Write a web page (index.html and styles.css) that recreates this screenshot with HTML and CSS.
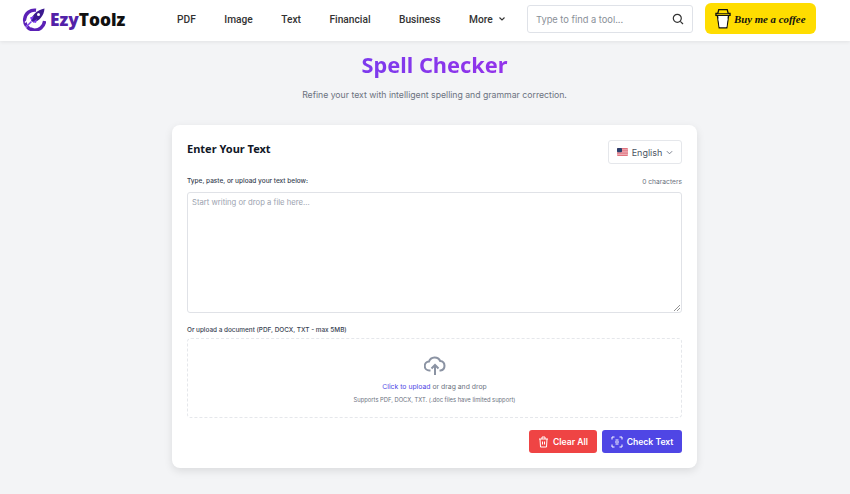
FILE: index.html
```html
<!DOCTYPE html>
<html lang="en">
<head>
<meta charset="UTF-8">
<meta name="viewport" content="width=device-width, initial-scale=1.0">
<title>Spell Checker - EzyToolz</title>
<link rel="stylesheet" href="styles.css">
</head>
<body>
<header class="site-header">
  <a class="logo" href="#">
    <svg class="logo-mark" width="24" height="24" viewBox="0 0 24 24">
      <path d="M14 3.200A10 10 0 1 0 22.600 14" fill="none" stroke="#5b21b6" stroke-width="3.400"/>
      <path d="M9 13.500C10 8 15 3 22.500 1.500 22 9 17 14 11.500 15.500Z" fill="#3b1a8f"/>
      <path d="M8 10.500 12 9 9.500 14ZM14 16l1-4-4.500 3Z" fill="#7c3aed"/>
      <circle cx="16.500" cy="7.500" r="1.500" fill="#fff"/>
      <path d="M3.500 20.500 9 15M8 20l3-3M3 15.500l3-3" stroke="#fff" stroke-width="1.300"/>
      <path d="M4 20 9.500 14.500" stroke="#7c3aed" stroke-width="1.400"/>
    </svg>
    <span class="logo-text"><span class="logo-ezy">Ezy</span>Toolz</span>
  </a>
  <nav class="main-nav">
    <a href="#">PDF</a>
    <a href="#">Image</a>
    <a href="#">Text</a>
    <a href="#">Financial</a>
    <a href="#">Business</a>
    <a class="nav-more" href="#">More
      <svg width="8" height="8" viewBox="0 0 8 8"><path d="M1.500 2.500 4 5l2.500-2.500" fill="none" stroke="#333" stroke-width="1.100"/></svg>
    </a>
  </nav>
  <div class="search">
    <span class="search-hint">Type to find a tool...</span>
    <svg width="12" height="12" viewBox="0 0 12 12"><circle cx="5.300" cy="5.300" r="4" fill="none" stroke="#333" stroke-width="1.200"/><path d="M8.300 8.300 11 11" stroke="#333" stroke-width="1.200"/></svg>
  </div>
  <a class="coffee" href="#">
    <svg width="16" height="21" viewBox="0 0 17 22">
      <path d="M2.500 7.500 4.500 21h8l2-13.500" fill="#fff" stroke="#111" stroke-width="1.500"/>
      <path d="M1 5.500h15v2.200H1z" fill="#ffdd00" stroke="#111" stroke-width="1.400"/>
      <path d="M3 5.500 4 1.500h9l1 4" fill="#ffdd00" stroke="#111" stroke-width="1.400"/>
      <path d="M3.500 11l1.300 9h7.400l1.300-9z" fill="#fff"/>
    </svg>
    <span>Buy me a coffee</span>
  </a>
</header>

<main class="page">
  <h1 class="title">Spell Checker</h1>
  <p class="subtitle">Refine your text with intelligent spelling and grammar correction.</p>

  <section class="card">
    <div class="card-top">
      <h2>Enter Your Text</h2>
      <button class="lang">
        <svg width="11" height="8" viewBox="0 0 11 8">
          <rect width="11" height="8" rx="1" fill="#e0737f"/>
          <path d="M0 1.700h11M0 3.300h11M0 4.900h11M0 6.500h11" stroke="#f3c3c8" stroke-width=".7"/>
          <rect width="5" height="4.200" rx="1" fill="#2c3e6b"/>
        </svg>
        English
        <svg width="7" height="7" viewBox="0 0 8 8"><path d="M1 2.500 4 5.500l3-3" fill="none" stroke="#6b7280" stroke-width="1"/></svg>
      </button>
    </div>

    <div class="field-row">
      <label>Type, paste, or upload your text below:</label>
      <span class="count">0 characters</span>
    </div>
    <div class="text-box">
      <span>Start writing or drop a file here...</span>
      <svg class="grip" width="6" height="6" viewBox="0 0 6 6"><path d="M6 0 0 6M6 3 3 6" stroke="#777" stroke-width=".8"/></svg>
    </div>

    <label class="upload-label">Or upload a document (PDF, DOCX, TXT - max 5MB)</label>
    <div class="drop">
      <svg width="22" height="20" viewBox="0 0 22 20" fill="none" stroke="#8b93a3" stroke-width="2">
        <path d="M6.500 14.500H5.500A4.500 4.500 0 0 1 5 5.500 6 6 0 0 1 16.200 5 4.800 4.800 0 0 1 16.500 14.500H15.500"/>
        <path d="M11 19V9M7.500 12.500 11 9l3.500 3.500"/>
      </svg>
      <p class="drop-main"><span class="drop-link">Click to upload</span> or drag and drop</p>
      <p class="drop-note">Supports PDF, DOCX, TXT. (.doc files have limited support)</p>
    </div>

    <div class="actions">
      <button class="btn btn-red">
        <svg width="11" height="12" viewBox="0 0 11 12" fill="none" stroke="#fff" stroke-width="1"><path d="M1 3h9M2 3l.5 8h6L9 3M4 3V1h3v2M4.500 5.500v3M6.500 5.500v3"/></svg>
        Clear All
      </button>
      <button class="btn btn-blue">
        <svg width="12" height="12" viewBox="0 0 12 12" fill="none" stroke="#fff" stroke-width="1"><path d="M1 3.500V1h2.500M8.500 1H11v2.500M11 8.500V11H8.500M3.500 11H1V8.500M4 6h4M4.500 4h3M4.500 8h3"/></svg>
        Check Text
      </button>
    </div>
  </section>
</main>
</body>
</html>
```

FILE: styles.css
```css
* {
  box-sizing: border-box;
}
html, body {
  height: 100%;
}
body {
  margin: 0;
  overflow: hidden;
  background: #f3f4f6;
  font-family: Inter, "Liberation Sans", sans-serif;
  color: #1f2937;
}
a {
  color: inherit;
  text-decoration: none;
}
p, h1, h2 {
  margin: 0;
}

.site-header {
  display: flex;
  align-items: center;
  height: 41px;
  padding: 0 34px 3px 22px;
  background: #fff;
  box-shadow: 0 1px 4px rgba(0, 0, 0, 0.08);
}
.logo {
  display: flex;
  align-items: center;
  gap: 4px;
  width: 155px;
  flex: none;
}
.logo-text {
  font-family: "Open Sans", sans-serif;
  font-size: 17.300px;
  font-weight: 800;
  color: #111;
}
.logo-ezy {
  color: #5221a8;
}
.main-nav {
  display: flex;
  align-items: center;
  gap: 28.500px;
  width: 350px;
  flex: none;
  font-family: Roboto, sans-serif;
  font-size: 10.200px;
  font-weight: 500;
  color: #333;
}
.nav-more {
  display: flex;
  align-items: center;
  gap: 5px;
}
.search {
  display: flex;
  align-items: center;
  justify-content: space-between;
  width: 166px;
  height: 28px;
  flex: none;
  padding: 0 8px;
  border: 1px solid #dfe2e8;
  border-radius: 3px;
  font-size: 9.300px;
  color: #8a8f98;
}
.coffee {
  display: flex;
  align-items: center;
  gap: 3px;
  width: 111px;
  height: 31px;
  flex: none;
  margin: 0 0 1px 12px;
  padding-left: 10px;
  border-radius: 6px;
  background: #ffdd00;
  font-family: "Liberation Serif", serif;
  font-size: 10.800px;
  font-style: italic;
  font-weight: 700;
  color: #111;
}

.page {
  display: flex;
  flex-direction: column;
  align-items: center;
  padding-left: 19px;
}
.title {
  margin-top: 8px;
  font-family: "Noto Sans", sans-serif;
  font-size: 21.800px;
  line-height: 32px;
  font-weight: 700;
  background: linear-gradient(90deg, #7c3aed, #9333ea);
  -webkit-background-clip: text;
  background-clip: text;
  color: transparent;
}
.subtitle {
  margin-top: 7px;
  font-size: 8.700px;
  line-height: 14px;
  color: #6b7280;
}
.card {
  width: 525px;
  height: 343px;
  margin-top: 23px;
  padding: 15px;
  border-radius: 8px;
  background: #fff;
  box-shadow: 0 3px 8px rgba(0, 0, 0, 0.1);
}
.card-top {
  display: flex;
  justify-content: space-between;
  align-items: flex-start;
}
.card-top h2 {
  font-family: "Noto Sans", sans-serif;
  font-size: 11px;
  line-height: 17px;
  font-weight: 700;
  color: #111827;
}
.lang {
  display: flex;
  align-items: center;
  justify-content: center;
  gap: 4px;
  width: 74px;
  height: 24px;
  border: 1px solid #e5e7eb;
  border-radius: 3px;
  background: #fff;
  font-family: inherit;
  font-size: 9px;
  color: #4b5563;
}
.field-row {
  display: flex;
  justify-content: space-between;
  align-items: flex-start;
  margin-top: 11px;
  line-height: 12px;
}
.field-row label, .upload-label {
  font-size: 6.500px;
  font-weight: 500;
  color: #374151;
}
.count {
  margin-top: 1px;
  font-size: 6.700px;
  color: #6b7280;
}
.text-box {
  position: relative;
  height: 121px;
  margin-top: 4px;
  padding: 4px;
  border: 1px solid #e0e2e7;
  border-radius: 3px;
  font-size: 7.700px;
  line-height: 11px;
  color: #9ca3af;
}
.grip {
  position: absolute;
  right: 1px;
  bottom: 1px;
}
.upload-label {
  display: block;
  margin-top: 11px;
  margin-bottom: 2px;
  font-size: 6.400px;
  line-height: 12px;
}
.drop {
  display: flex;
  flex-direction: column;
  align-items: center;
  height: 80px;
  padding-top: 17px;
  border: 1px dashed #e5e7eb;
  border-radius: 4px;
}
.drop-main {
  margin-top: 6px;
  font-size: 6.850px;
  line-height: 10px;
  color: #6b7280;
}
.drop-link {
  color: #4f46e5;
}
.drop-note {
  margin-top: 3px;
  font-size: 5.800px;
  line-height: 10px;
  color: #6b7280;
}
.actions {
  display: flex;
  justify-content: flex-end;
  gap: 5px;
  margin-top: 12px;
}
.btn {
  display: flex;
  align-items: center;
  justify-content: center;
  gap: 4px;
  height: 23px;
  border: 0;
  border-radius: 3px;
  font-family: inherit;
  font-size: 8.600px;
  font-weight: 600;
  color: #fff;
}
.btn-red {
  width: 68px;
  background: #ef4444;
}
.btn-blue {
  width: 80px;
  background: #4f46e5;
}
```
